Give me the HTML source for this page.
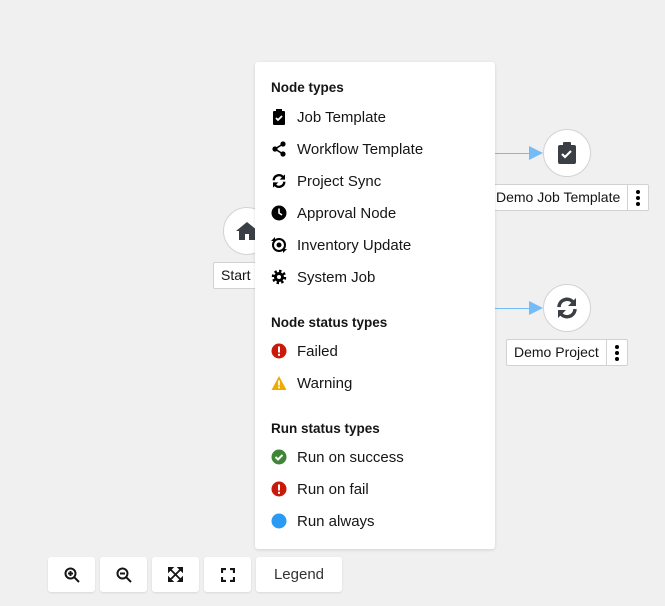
<!DOCTYPE html><html><head><style>
body{margin:0;width:665px;height:606px;background:#f0f0f0;font-family:"Liberation Sans",sans-serif;position:relative;overflow:hidden;color:#151515}
.circ{position:absolute;width:46px;height:46px;border-radius:50%;background:#fff;border:1px solid #d2d2d2;display:flex;align-items:center;justify-content:center}
.lbl{position:absolute;height:25px;background:#fff;border:1px solid #d2d2d2;border-radius:2px;font-size:14px;line-height:25px;display:flex}
.lbl span{padding:0 7px}
.lbl .k{border-left:1px solid #d2d2d2;width:20px;display:flex;align-items:center;justify-content:center;padding:0}
.panel{position:absolute;left:255px;top:62px;width:240px;height:487px;background:#fff;border-radius:3px;box-shadow:0 1px 3px rgba(0,0,0,.12)}
.h{position:absolute;left:16px;font-weight:bold;font-size:13.5px}
.it{position:absolute;left:16px;font-size:15px;line-height:16px;height:16px;display:flex;align-items:center}
.it svg{width:16px;height:16px;margin-right:10px;flex:none;position:relative;top:1px}
.it b{font-weight:normal;position:relative;top:2px}
.btn{position:absolute;top:557px;height:35px;background:#fff;border-radius:3px;box-shadow:0 1px 2px rgba(0,0,0,.1);display:flex;align-items:center;justify-content:center;font-size:15px;color:#333}
.line{position:absolute;height:1px;background:#73bcf7}
</style></head><body>
<div class="line" style="left:495px;top:153px;width:40px"></div>
<svg style="position:absolute;left:529px;top:146px" width="14" height="14"><path d="M0 0L14 7L0 14Z" fill="#73bcf7"/></svg>
<div class="line" style="left:495px;top:308px;width:40px"></div>
<svg style="position:absolute;left:529px;top:301px" width="14" height="14"><path d="M0 0L14 7L0 14Z" fill="#73bcf7"/></svg>
<div class="circ" style="left:543px;top:129px"><svg width="18" height="22" viewBox="0 0 18 22"><rect x="0" y="3" width="18" height="19" rx="2" fill="#393f44"/><rect x="5" y="0" width="8" height="5" rx="1" fill="#393f44"/><path d="M4 12l3 3 6-6" stroke="#fff" stroke-width="2.2" fill="none"/></svg></div>
<div class="lbl" style="left:488px;top:184px"><span>Demo Job Template</span><div class="k"><svg width="4" height="16"><circle cx="2" cy="2" r="2"/><circle cx="2" cy="8" r="2"/><circle cx="2" cy="14" r="2"/></svg></div></div>
<div class="circ" style="left:543px;top:284px"><svg width="24" height="24" viewBox="0 0 24 24"><path d="M4 11A8 8 0 0 1 18 6" stroke="#393f44" stroke-width="3.5" fill="none"/><path d="M21 2v8h-8z" fill="#393f44"/><path d="M20 13A8 8 0 0 1 6 18" stroke="#393f44" stroke-width="3.5" fill="none"/><path d="M3 22v-8h8z" fill="#393f44"/></svg></div>
<div class="lbl" style="left:506px;top:339px"><span>Demo Project</span><div class="k"><svg width="4" height="16"><circle cx="2" cy="2" r="2"/><circle cx="2" cy="8" r="2"/><circle cx="2" cy="14" r="2"/></svg></div></div>
<div class="circ" style="left:223px;top:207px"><svg width="24" height="20" viewBox="0 0 24 20"><path d="M12 1L1 10h3v9h6v-6h4v6h6v-9h3z" fill="#393f44"/></svg></div>
<div class="lbl" style="left:213px;top:262px"><span>Start</span></div>
<div class="panel">
<div class="h" style="top:18px">Node types</div>
<div class="it" style="top:46px"><svg viewBox="0 0 16 16"><rect x="2" y="2" width="12" height="14" rx="1"/><rect x="5" y="0" width="6" height="4"/><path d="M5 9l2 2 4-4" stroke="#fff" stroke-width="1.8" fill="none"/></svg><b>Job Template</b></div>
<div class="it" style="top:78px"><svg viewBox="0 0 16 16"><circle cx="12" cy="3" r="2.6"/><circle cx="4" cy="8" r="2.6"/><circle cx="12" cy="13" r="2.6"/><path d="M12 3L4 8L12 13" stroke="#000" stroke-width="1.6" fill="none"/></svg><b>Workflow Template</b></div>
<div class="it" style="top:110px"><svg viewBox="0 0 24 24"><path d="M4 11A8 8 0 0 1 18 6" stroke="#000" stroke-width="3.5" fill="none"/><path d="M21 2v8h-8z"/><path d="M20 13A8 8 0 0 1 6 18" stroke="#000" stroke-width="3.5" fill="none"/><path d="M3 22v-8h8z"/></svg><b>Project Sync</b></div>
<div class="it" style="top:142px"><svg viewBox="0 0 16 16"><circle cx="8" cy="8" r="7.5"/><path d="M8 3.5V8l3 2" stroke="#fff" stroke-width="1.6" fill="none"/></svg><b>Approval Node</b></div>
<div class="it" style="top:174px"><svg viewBox="0 0 16 16"><circle cx="8" cy="8" r="6" stroke="#000" stroke-width="2" fill="none"/><circle cx="8" cy="8" r="2.5"/><path d="M0 4h4v-4zM16 12h-4v4z"/></svg><b>Inventory Update</b></div>
<div class="it" style="top:206px"><svg viewBox="0 0 16 16"><circle cx="8" cy="8" r="5.5" stroke="#000" stroke-width="3.5" stroke-dasharray="2.2 2.1" fill="none"/><circle cx="8" cy="8" r="5"/><circle cx="8" cy="8" r="2" fill="#fff"/></svg><b>System Job</b></div>
<div class="h" style="top:253px">Node status types</div>
<div class="it" style="top:280px"><svg viewBox="0 0 16 16"><circle cx="8" cy="8" r="7.5" fill="#c9190b"/><rect x="7" y="3.5" width="2" height="6" fill="#fff"/><rect x="7" y="10.8" width="2" height="2" fill="#fff"/></svg><b>Failed</b></div>
<div class="it" style="top:312px"><svg viewBox="0 0 16 16"><path d="M8 1L15.5 15H.5z" fill="#f0ab00"/><rect x="7.1" y="5.5" width="1.8" height="5" fill="#fff"/><rect x="7.1" y="11.5" width="1.8" height="1.8" fill="#fff"/></svg><b>Warning</b></div>
<div class="h" style="top:359px">Run status types</div>
<div class="it" style="top:386px"><svg viewBox="0 0 16 16"><circle cx="8" cy="8" r="7.5" fill="#3e8635"/><path d="M4.5 8l2.5 2.5 4.5-4.5" stroke="#fff" stroke-width="2" fill="none"/></svg><b>Run on success</b></div>
<div class="it" style="top:418px"><svg viewBox="0 0 16 16"><circle cx="8" cy="8" r="7.5" fill="#c9190b"/><rect x="7" y="3.5" width="2" height="6" fill="#fff"/><rect x="7" y="10.8" width="2" height="2" fill="#fff"/></svg><b>Run on fail</b></div>
<div class="it" style="top:450px"><svg viewBox="0 0 16 16"><circle cx="8" cy="8" r="7.5" fill="#2b9af3"/></svg><b>Run always</b></div>
</div>
<div class="btn" style="left:48px;width:47px"><svg width="16" height="16" viewBox="0 0 16 16"><circle cx="6.5" cy="6.5" r="5" stroke="#151515" stroke-width="2" fill="none"/><path d="M10 10l5 5M4 6.5h5M6.5 4v5" stroke="#151515" stroke-width="2"/></svg></div>
<div class="btn" style="left:100px;width:47px"><svg width="16" height="16" viewBox="0 0 16 16"><circle cx="6.5" cy="6.5" r="5" stroke="#151515" stroke-width="2" fill="none"/><path d="M10 10l5 5M4 6.5h5" stroke="#151515" stroke-width="2"/></svg></div>
<div class="btn" style="left:152px;width:47px"><svg width="15" height="15" viewBox="0 0 15 15"><path d="M0 0h5L0 5zM15 0v5L10 0zM0 15V10l5 5zM15 15h-5l5-5zM2 2l11 11M13 2L2 13" stroke="#151515" stroke-width="1.8" fill="#151515"/></svg></div>
<div class="btn" style="left:204px;width:47px"><svg width="14" height="14" viewBox="0 0 14 14"><path d="M1 5V1h4M9 1h4v4M13 9v4H9M5 13H1V9" stroke="#151515" stroke-width="2.2" fill="none"/></svg></div>
<div class="btn" style="left:256px;width:86px">Legend</div>
</body></html>
